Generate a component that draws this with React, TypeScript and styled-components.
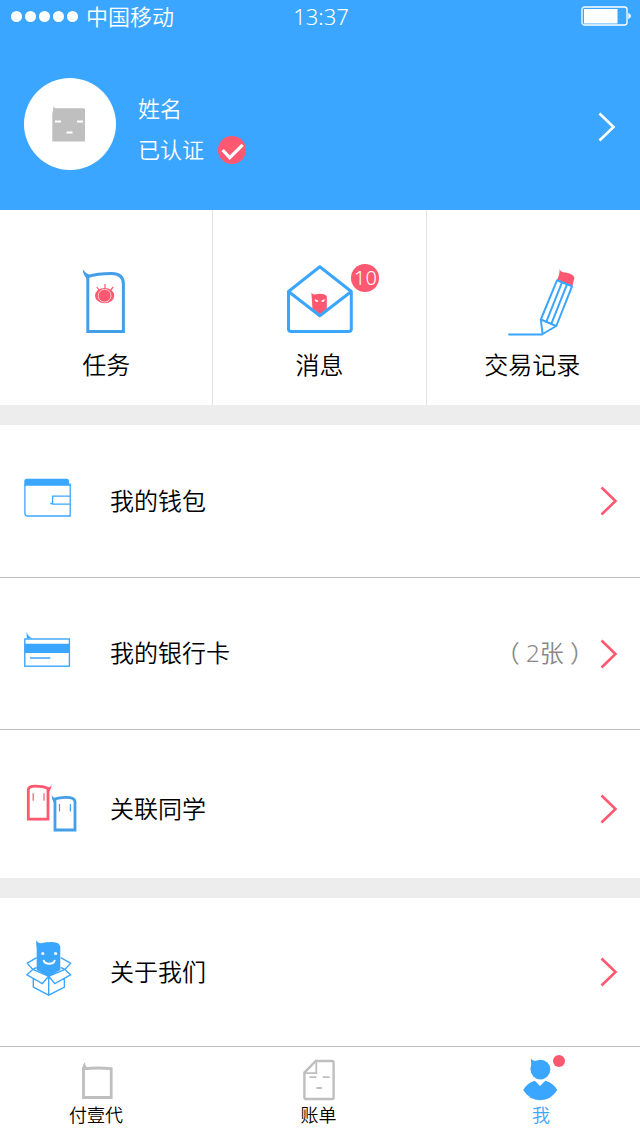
import React from "react";
import styled, { createGlobalStyle } from "styled-components";

const blue = "#3ba6ff";
const softBlue = "#449fe8";
const red = "#ff5870";
const grey = "#bfbfbf";

const GlobalStyle = createGlobalStyle`
  *, *::before, *::after { box-sizing: border-box; }
  body {
    margin: 0;
    background: #fff;
    color: #000;
    font-family: "Noto Sans", "Noto Sans CJK SC", sans-serif;
    font-weight: 350;
  }
  svg { display: block; flex: none; }
  a { color: inherit; text-decoration: none; }
`;

const Screen = styled.div`
  min-height: 100vh;
  display: flex;
  flex-direction: column;
`;

const Header = styled.header`
  background: ${blue};
  color: #fff;
  font-size: 22px;
`;

const StatusBar = styled.div`
  display: grid;
  grid-template-columns: 1fr auto 1fr;
  align-items: center;
  height: 34px;
  padding: 0 9px 2px 11px;
  line-height: 32px;
`;

const Carrier = styled.div`
  display: flex;
  align-items: center;
  gap: 8px;
`;

const Signal = styled.span`
  display: flex;
  gap: 3px;
`;

const SignalDot = styled.i`
  width: 11px;
  height: 11px;
  border-radius: 50%;
  background: #fff;
`;

const BatterySlot = styled.div`
  display: flex;
  justify-content: flex-end;
`;

const Profile = styled.section`
  display: flex;
  align-items: center;
  padding: 44px 24px 40px;
`;

const Avatar = styled.div`
  display: flex;
  align-items: center;
  justify-content: center;
  width: 92px;
  height: 92px;
  border-radius: 50%;
  background: #fff;
`;

const Identity = styled.div`
  flex: 1;
  padding: 10px 0 0 22px;
  line-height: 41px;
`;

const Line = styled.p`
  display: flex;
  align-items: center;
  gap: 14px;
  margin: 0;
`;

const PlainButton = styled.button`
  padding: 6px 0 0;
  border: 0;
  background: none;
  color: inherit;
  cursor: pointer;
`;

const Shortcuts = styled.nav`
  display: grid;
  grid-template-columns: repeat(3, 1fr);
`;

const Shortcut = styled.a`
  display: flex;
  flex-direction: column;
  align-items: center;
  padding: 54px 0 24px;
  font-size: 24px;
  line-height: 32px;
  border-right: 1px solid #e4e4e4;
  &:last-child { border-right: 0; padding-right: 2px; }
`;

const ShortcutIcon = styled.span`
  position: relative;
  margin-bottom: 13px;
`;

const Count = styled.span`
  position: absolute;
  top: 0;
  right: -12px;
  width: 28px;
  height: 28px;
  border-radius: 50%;
  background: ${red};
  color: #fff;
  font-size: 20px;
  line-height: 28px;
  text-align: center;
`;

const Menu = styled.ul`
  margin: 0;
  padding: 0;
  list-style: none;
  border-top: 20px solid #ededed;
`;

const MenuItem = styled.li`
  & + & { border-top: 1px solid #bdbdbd; }
`;

const MenuLink = styled.a<{ $height: number; $top?: number }>`
  display: flex;
  align-items: center;
  min-height: ${(p) => p.$height}px;
  padding: ${(p) => p.$top ?? 0}px 22px 0 24px;
  font-size: 24px;
  line-height: 36px;
`;

const MenuLabel = styled.span`
  flex: 1;
  padding: 0 0 1px 30px;
`;

const MenuNote = styled.span`
  padding: 0 6px 2px 0;
  color: #888;
`;

const TabBar = styled.nav`
  display: flex;
  flex: 1;
  justify-content: space-between;
  padding: 9px 59px 8px 56px;
  border-top: 1px solid #bdbdbd;
`;

const Tab = styled.a<{ $active?: boolean }>`
  display: flex;
  flex-direction: column;
  align-items: center;
  width: 80px;
  color: ${(p) => (p.$active ? blue : "#000")};
  font-size: 18px;
  line-height: 26px;
`;

const TabIcon = styled.span`
  position: relative;
`;

const Dot = styled.i`
  position: absolute;
  top: -1px;
  right: 0;
  width: 12px;
  height: 12px;
  border-radius: 50%;
  background: ${red};
`;

const Chevron = ({ color }: { color: string }) => (
  <svg width="18" height="30" viewBox="0 0 18 30" fill="none" stroke={color} strokeWidth="2.6" aria-hidden="true">
    <path d="M1.5 1.5 15.5 15 1.5 28.5" />
  </svg>
);

const Battery = () => (
  <svg width="50" height="20" viewBox="0 0 50 20" role="img" aria-label="电量">
    <rect x="1" y="1" width="45" height="18" rx="2.5" fill="none" stroke="#fff" strokeWidth="1.3" />
    <rect x="3" y="3" width="33.5" height="14.5" fill="#fff" />
    <path d="M47.3 7q2.7 1 2.7 3t-2.7 3z" fill="#fff" />
  </svg>
);

const AvatarFace = () => (
  <svg width="36" height="36" viewBox="0 0 36 36" aria-hidden="true">
    <path d="M1.2 0q.4 1.9 2 2.2H32l1 1V35.6H.3V7.5Q1.5 4 1.2 0z" fill={grey} />
    <path d="M3 15.5H9M25 15.5H31M14.5 26.5H20.5" stroke="#fff" strokeWidth="2.2" />
  </svg>
);

const Verified = () => (
  <svg width="28" height="28" viewBox="0 0 28 28" aria-hidden="true">
    <circle cx="14" cy="14" r="14" fill={red} />
    <path d="M4.6 14 11.7 21.6 24.7 8.8" fill="none" stroke="#fff" strokeWidth="3.2" />
  </svg>
);

const TaskIcon = () => (
  <svg width="96" height="72" viewBox="0 0 96 72" fill="none" aria-hidden="true">
    <path d="M29.8 12V67.6H65.4V20Q65.4 9.6 53.5 9.6 39 9.6 29.8 12.6z" stroke={softBlue} strokeWidth="3" />
    <path d="M24.8 5.5Q27.5 9.5 32 11L30 17 28 13.5Q25 11 24.8 5.5z" fill={softBlue} />
    <ellipse cx="46.6" cy="31.7" rx="9.6" ry="7.6" fill={red} />
    <circle cx="46.6" cy="31.7" r="6.4" stroke="#fff" strokeWidth="0.7" />
    <path d="M47 25V20M41.5 26.5 38.7 23M52.3 26.5 55.2 23" stroke={red} strokeWidth="1.2" />
  </svg>
);

const MessageIcon = () => (
  <svg width="96" height="72" viewBox="0 0 96 72" fill="none" aria-hidden="true">
    <path d="M40.4 28.8Q42 31 45 30.2 52.5 29 55.8 32V45L48.8 51.5 41.5 45.5z" fill={red} />
    <path d="m43.8 35 3.6 1.7q-.8 2-3 .6zM53.8 35l-3.6 1.7q.8 2 3 .6z" fill="#fff" />
    <path
      d="M17.5 27.5 48.8 2.8 80.3 27.5V65Q80.3 67.6 77.7 67.6H20.1Q17.5 67.6 17.5 65zL48.8 51.8 80.3 27.5"
      stroke={blue}
      strokeWidth="3"
      strokeLinejoin="round"
    />
  </svg>
);

const PencilIcon = () => (
  <svg width="96" height="72" viewBox="0 0 96 72" fill="none" aria-hidden="true">
    <path d="M75.5 5Q77 9 82 8.4 90 10 90.4 14L88.4 22 73 16Q76 10 75.5 5z" fill={red} />
    <path
      d="M73 16.3 88 22.3 72.3 62 56.8 55.5zM56.8 55.5 58.6 70 72.3 62M78 18.3 62.3 57.8M83 20.3 67.3 59.8M24.3 70.6H58.6"
      stroke={blue}
      strokeWidth="2"
      strokeLinejoin="round"
    />
  </svg>
);

const WalletIcon = () => (
  <svg width="56" height="64" viewBox="0 0 56 64" fill="none" aria-hidden="true">
    <path d="M.3 16.8V12Q.3 9.7 2.6 9.7H42.5Q45 9.7 45 12V14.5H46.5V16.8z" fill={blue} />
    <path d="M.9 15V44.5Q.9 47 3.4 47H46.2V15M46.2 27.2H28.6V35.2H46.2M28.6 34.5H26.3" stroke={blue} strokeWidth="1.3" />
  </svg>
);

const BankCardIcon = () => (
  <svg width="56" height="64" viewBox="0 0 56 64" fill="none" aria-hidden="true">
    <path d="M2.5 9.8Q3.8 14.5 8.5 16.5H2.8z" fill={blue} />
    <rect x="0.8" y="17" width="44.6" height="27.2" stroke={blue} strokeWidth="1.4" />
    <path d="M.5 21.8H45.8V31H.5z" fill={blue} />
    <path d="M6 36H26.3" stroke={blue} strokeWidth="1.5" />
  </svg>
);

const ClassmatesIcon = () => (
  <svg width="56" height="64" viewBox="0 0 56 64" fill="none" aria-hidden="true">
    <path d="M4.3 42.2V13Q4.3 9.3 11 9.2 19 9.2 24 11.5V42.2z" stroke={red} strokeWidth="2.8" />
    <path d="M27.8 7.5Q27 12.5 25.3 14.5L22 11.5Q26 11 27.8 7.5z" fill={red} />
    <path d="M9.2 16.3V23.7M20 16.3V23.7" stroke={red} strokeWidth="1.2" />
    <path d="M31 53V22Q35 20.4 42 20.4 51 20.3 51 25V53z" stroke={softBlue} strokeWidth="2.8" />
    <path d="M27.6 17.8Q29 21.5 33 21.5L30 26Q27.5 23 27.6 17.8z" fill={softBlue} />
    <path d="M35.5 27V34.5M46.4 27V34.5" stroke={softBlue} strokeWidth="1.2" />
  </svg>
);

const AboutIcon = () => (
  <svg width="56" height="64" viewBox="0 0 56 64" fill="none" aria-hidden="true">
    <path d="M12.3 0Q13.5 3 17 3.2 22 2 28 2 36 2.2 36.3 7V30L24.7 36.5 12.7 30V9Q11.8 4 12.3 0z" fill={blue} />
    <circle cx="18.8" cy="13.5" r="1.6" fill="#fff" />
    <circle cx="31.6" cy="13.5" r="1.6" fill="#fff" />
    <path d="M19.7 20.6Q20.5 23.8 25.2 23.8T30.7 20.6" stroke="#fff" strokeWidth="1.9" strokeLinecap="round" />
    <path
      d="M12.7 17.7 3.3 23.2 8.7 29.4 3 34.8 18.3 43.6 24.7 36.2 30.8 43.6 46.6 34.8 41 29.4 46.6 23.2 36.7 17.7M8.7 29.4 24.7 36.2 41 29.4M9.3 38.8V47L24.7 55.2 40.4 47V38.8M24.7 36.2V55.2M12.7 27.5 8.7 29.4M36.7 27.5 41 29.4"
      stroke={blue}
      strokeWidth="1.4"
    />
  </svg>
);

const PayTabIcon = () => (
  <svg width="48" height="46" viewBox="0 0 48 46" fill="none" aria-hidden="true">
    <path d="M11.5 12.8Q25 11.3 39.2 12.6V41.5H11.5z" stroke={grey} strokeWidth="2.8" />
    <path d="M13 6.3Q13.2 10.5 16 12L10.2 15Q10 9 13 6.3z" fill={grey} />
  </svg>
);

const BillTabIcon = () => (
  <svg width="48" height="46" viewBox="0 0 48 46" fill="none" stroke={grey} aria-hidden="true">
    <path d="M20.8 5H37Q38.6 5 38.6 6.6V41.4Q38.6 43 37 43H11Q9.4 43 9.4 41.4V16.6z" strokeWidth="2.4" />
    <path d="M21.3 5.5V17.2H10M14.4 21.2H21.4M27.6 21.2H34.6M21.4 32H27" strokeWidth="1.8" />
  </svg>
);

const MeTabIcon = () => (
  <svg width="48" height="46" viewBox="0 0 48 46" fill={blue} aria-hidden="true">
    <circle cx="23.4" cy="13.6" r="9.9" />
    <path d="M14 2.8Q15.5 5.2 20 5L14 14.5Q13.3 12 14.3 8 13.6 5.5 14 2.8z" />
    <path d="M17.8 24.8 23 30 28.3 24.8Q36 26.8 40.3 34 34 44.2 23.2 44.2T6.2 34Q10.5 26.8 17.8 24.8z" />
  </svg>
);

type Entry = {
  label: string;
  icon: React.ReactNode;
  height: number;
  top?: number;
  note?: string;
};

const accountEntries: Entry[] = [
  { label: "我的钱包", icon: <WalletIcon />, height: 152 },
  { label: "我的银行卡", icon: <BankCardIcon />, height: 151, note: "（ 2张 ）" },
  { label: "关联同学", icon: <ClassmatesIcon />, height: 148, top: 10 },
];

const aboutEntries: Entry[] = [{ label: "关于我们", icon: <AboutIcon />, height: 148 }];

const MenuList = ({ entries }: { entries: Entry[] }) => (
  <Menu>
    {entries.map((e) => (
      <MenuItem key={e.label}>
        <MenuLink href="#" $height={e.height} $top={e.top}>
          {e.icon}
          <MenuLabel>{e.label}</MenuLabel>
          {e.note && <MenuNote>{e.note}</MenuNote>}
          <Chevron color={red} />
        </MenuLink>
      </MenuItem>
    ))}
  </Menu>
);

export default function App() {
  return (
    <Screen lang="zh-CN">
      <GlobalStyle />
      <Header>
        <StatusBar>
          <Carrier>
            <Signal>
              {[0, 1, 2, 3, 4].map((n) => (
                <SignalDot key={n} />
              ))}
            </Signal>
            中国移动
          </Carrier>
          <time>13:37</time>
          <BatterySlot>
            <Battery />
          </BatterySlot>
        </StatusBar>
        <Profile>
          <Avatar>
            <AvatarFace />
          </Avatar>
          <Identity>
            <Line>姓名</Line>
            <Line>
              已认证
              <Verified />
            </Line>
          </Identity>
          <PlainButton type="button" aria-label="个人资料">
            <Chevron color="#fff" />
          </PlainButton>
        </Profile>
      </Header>
      <Shortcuts>
        <Shortcut href="#">
          <ShortcutIcon>
            <TaskIcon />
          </ShortcutIcon>
          任务
        </Shortcut>
        <Shortcut href="#">
          <ShortcutIcon>
            <MessageIcon />
            <Count>10</Count>
          </ShortcutIcon>
          消息
        </Shortcut>
        <Shortcut href="#">
          <ShortcutIcon>
            <PencilIcon />
          </ShortcutIcon>
          交易记录
        </Shortcut>
      </Shortcuts>
      <MenuList entries={accountEntries} />
      <MenuList entries={aboutEntries} />
      <TabBar>
        <Tab href="#">
          <TabIcon>
            <PayTabIcon />
          </TabIcon>
          付壹代
        </Tab>
        <Tab href="#">
          <TabIcon>
            <BillTabIcon />
          </TabIcon>
          账单
        </Tab>
        <Tab href="#" $active aria-current="page">
          <TabIcon>
            <MeTabIcon />
            <Dot />
          </TabIcon>
          我
        </Tab>
      </TabBar>
    </Screen>
  );
}
